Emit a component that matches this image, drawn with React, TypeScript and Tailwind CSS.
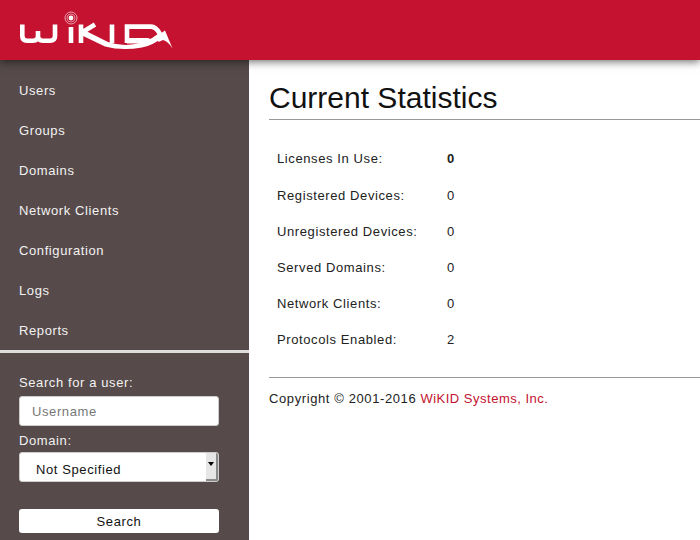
const navItems = ["Users", "Groups", "Domains", "Network Clients", "Configuration", "Logs", "Reports"];

const stats = [
  { label: "Licenses In Use:", value: "0", bold: true },
  { label: "Registered Devices:", value: "0" },
  { label: "Unregistered Devices:", value: "0" },
  { label: "Served Domains:", value: "0" },
  { label: "Network Clients:", value: "0" },
  { label: "Protocols Enabled:", value: "2" },
];

// viewBox uses the header's own pixel coordinates
const Logo = () => (
  <svg width="156" height="42" viewBox="18 9 156 42" fill="none" className="block">
    <circle cx="71" cy="18" r="6" stroke="#e9a3b1" strokeWidth="1" />
    <circle cx="71" cy="18" r="4" stroke="#e9a3b1" strokeWidth="0.8" />
    <circle cx="71" cy="18" r="2.4" fill="#fff" />
    <g stroke="#fff" strokeWidth="4.6" fill="none">
      {/* W */}
      <path d="M22.3 24.5V36Q22.3 40.7 27 40.7H33Q38 40.7 38 36V31M38 36Q38 40.7 43 40.7H50Q55 40.7 55 36V24.5" />
      {/* i */}
      <path d="M71 27V43" />
      {/* K */}
      <path d="M81 24.5V43M81 33L95 24.5" />
      {/* I */}
      <path d="M112 24.5V43" />
      {/* D */}
      <path d="M127 43V26.6H151Q156 26.6 160 34" />
    </g>
    {/* K leg running into the swoosh under the D */}
    <path d="M84 30L108 42Q124 47.5 142 42.5Q152 39.5 160 32L163 37Q153 45.5 142 47.5Q122 51 105 46.5L81 35Z" fill="#fff" />
    <path d="M127 38H148L153 40L142 43.5H127Z" fill="#fff" />
    {/* bird tail */}
    <path d="M157 36L165 30.5L172.5 48.5Q168 41 163 40L158.5 42Z" fill="#fff" />
  </svg>
);

export default function App() {
  return (
    <div className="flex h-[540px] w-[700px] flex-col overflow-hidden bg-white font-['Liberation_Sans',Arial,sans-serif] text-[13px] tracking-[0.6px] text-[#222]">
      <header className="relative z-10 flex h-[60px] shrink-0 items-start bg-[#c41230] pl-[18px] pt-[9px] shadow-[0_2px_8px_rgba(0,0,0,0.55)]">
        <Logo />
      </header>
      <div className="flex min-h-0 flex-1">
        <aside className="w-[249px] shrink-0 bg-[#564a4a] text-[#f2f2f2]">
          <nav className="pt-[11px]">
            {navItems.map((item) => (
              <a key={item} href="#" className="block h-[40px] pl-[19px] leading-[40px]">
                {item}
              </a>
            ))}
          </nav>
          <div className="-mt-px h-[3px] bg-[#dedede]" />
          <div className="pl-[19px] pr-[30px] pt-[22px]">
            <label className="block leading-[16px]">Search for a user:</label>
            <div className="mt-[5px] flex h-[30px] items-center rounded-[3px] border border-[#cccccc] bg-white pl-[12px] pt-[2px] text-[#777]">
              Username
            </div>
            <label className="mt-[7px] block leading-[16px]">Domain:</label>
            <div className="mt-[3px] flex h-[30px] items-stretch overflow-hidden rounded-[3px] border border-[#cccccc] bg-white text-[#111]">
              <span className="flex-1 pl-[16px] pt-[9px] leading-[16px]">Not Specified</span>
              <span className="flex w-[12px] items-start justify-center border-b-2 border-r-2 border-[#8a8a8a] bg-[#e6e6e6] pt-[9px]">
                <span className="h-0 w-0 border-x-[3px] border-t-[4px] border-x-transparent border-t-black" />
              </span>
            </div>
            <button className="mt-[27px] block h-[24px] w-full rounded-[3px] bg-white pt-[1px] text-center leading-[24px] text-[#111]">
              Search
            </button>
          </div>
        </aside>
        <main className="min-w-0 flex-1">
          <h1 className="ml-[20px] border-b border-[#999] pb-[3px] pt-[19px] text-[30px] leading-[37px] tracking-normal text-[#111]">
            Current Statistics
          </h1>
          <div className="ml-[20px] border-b border-[#999] pb-[19px] pl-[8px] pt-[20px]">
            {stats.map((row, i) => (
              <div key={row.label} className={i === 0 ? "flex h-[38px] items-center pb-px" : "flex h-[36px] items-center"}>
                <span className="w-[170px]">{row.label}</span>
                <span className={row.bold ? "font-bold" : ""}>{row.value}</span>
              </div>
            ))}
          </div>
          <p className="ml-[20px] pt-[13px] leading-[16px]">
            Copyright © 2001-2016 <a href="#" className="tracking-[0.5px] text-[#c41230]">WiKID Systems, Inc.</a>
          </p>
        </main>
      </div>
    </div>
  );
}
